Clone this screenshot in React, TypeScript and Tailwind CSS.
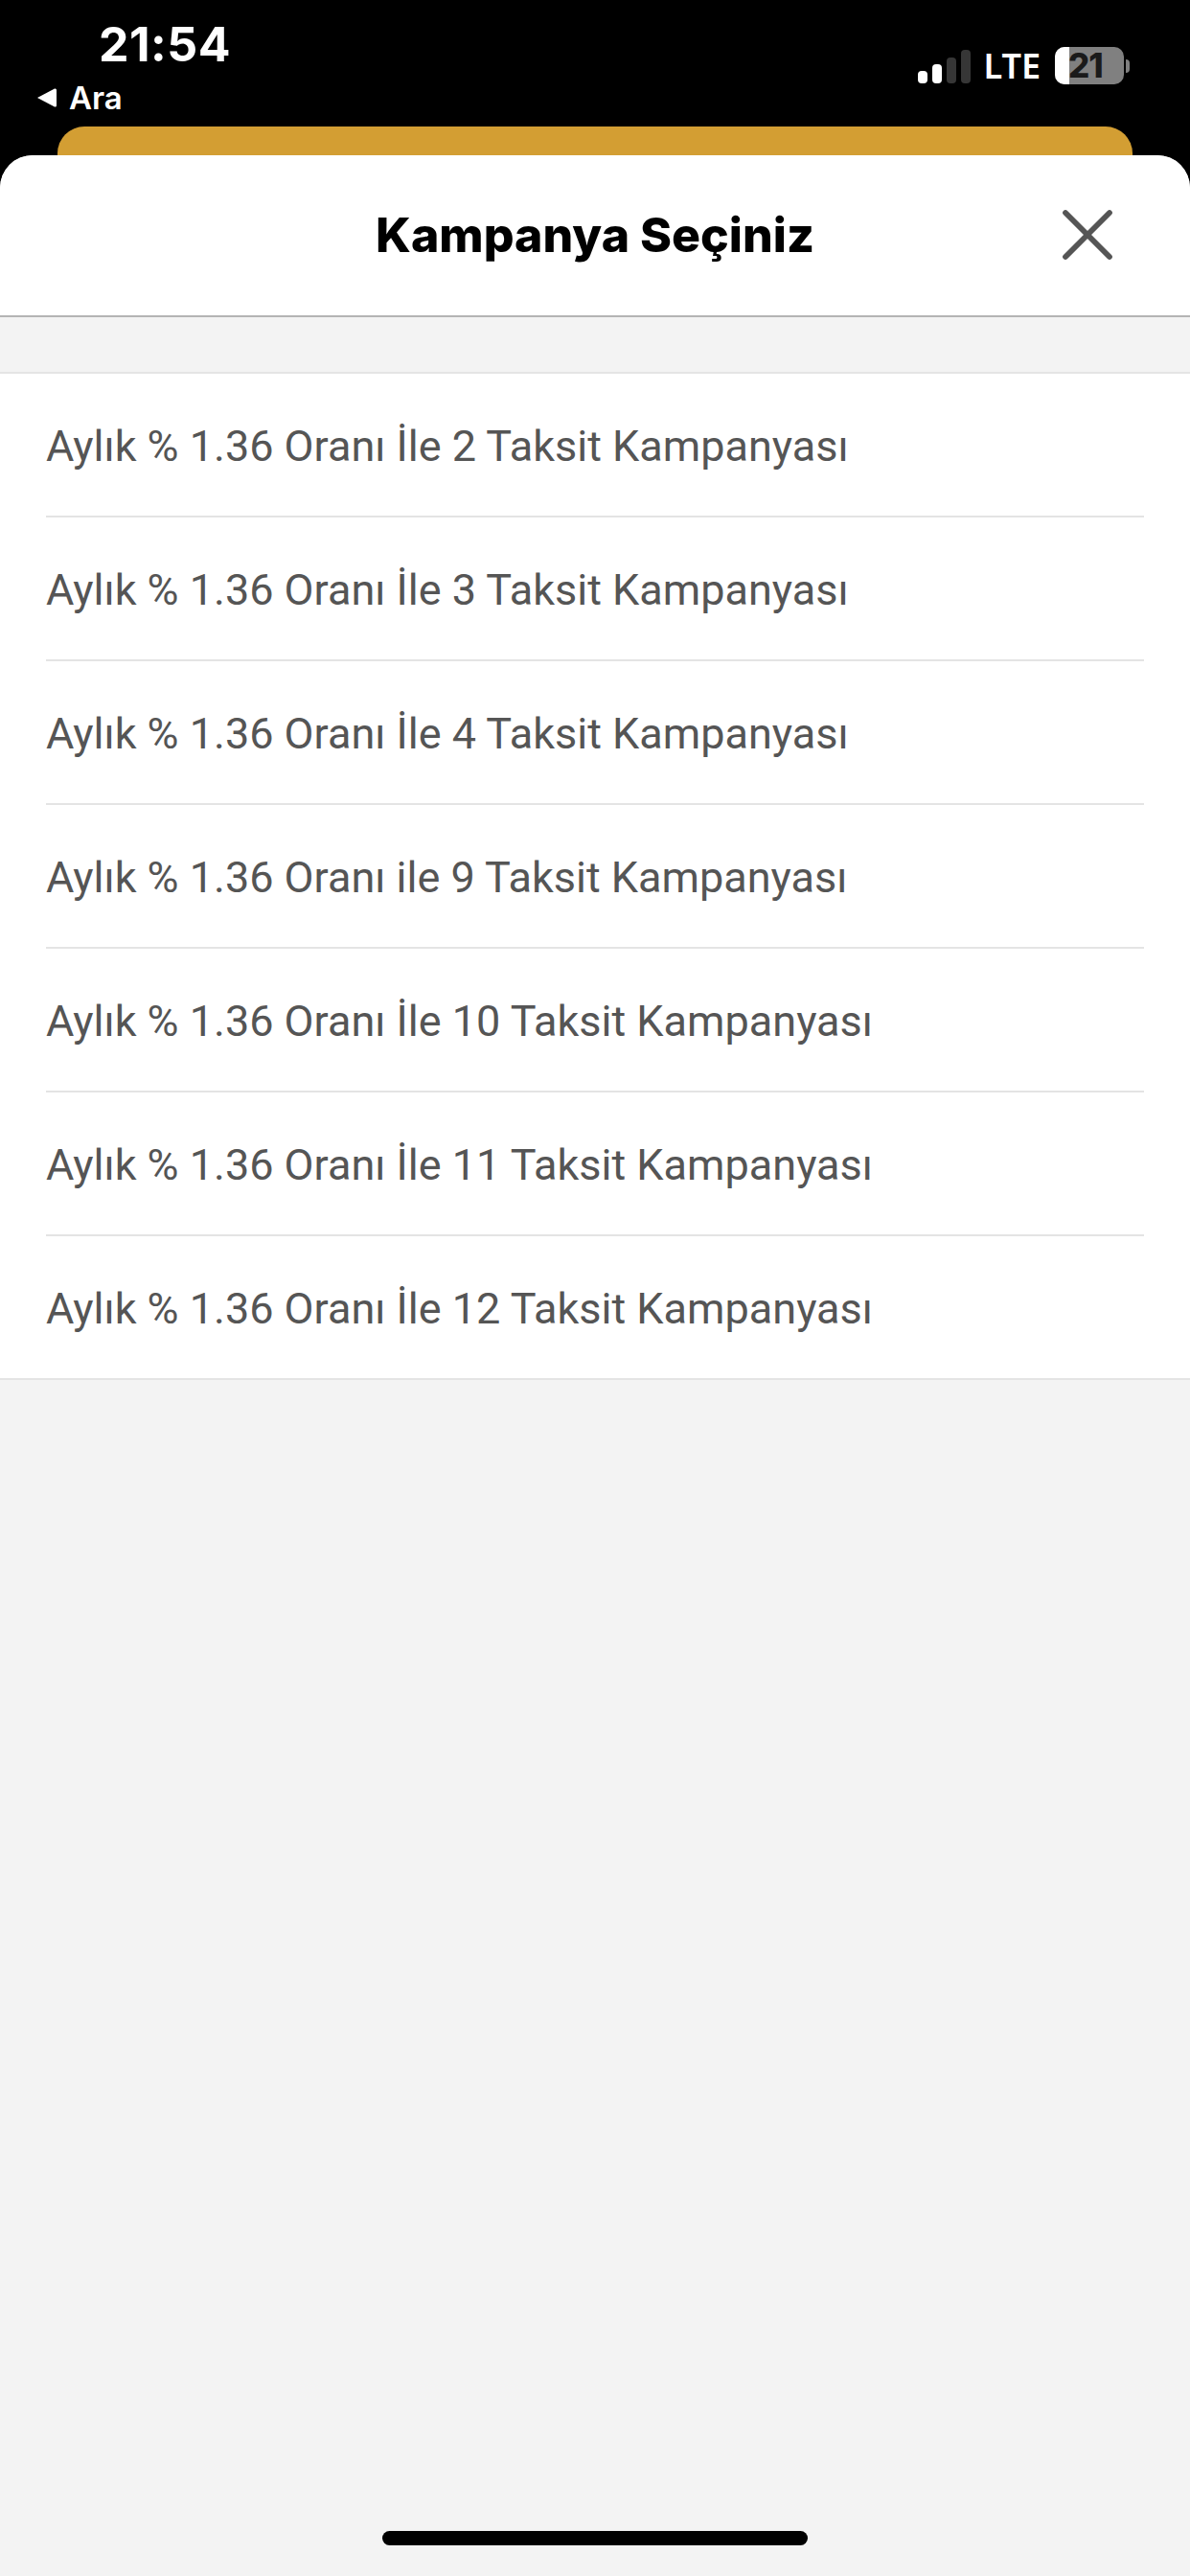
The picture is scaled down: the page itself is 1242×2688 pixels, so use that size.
import { X } from "lucide-react";

const campaigns = [
  "Aylık % 1.36 Oranı İle 2 Taksit Kampanyası",
  "Aylık % 1.36 Oranı İle 3 Taksit Kampanyası",
  "Aylık % 1.36 Oranı İle 4 Taksit Kampanyası",
  "Aylık % 1.36 Oranı ile 9 Taksit Kampanyası",
  "Aylık % 1.36 Oranı İle 10 Taksit Kampanyası",
  "Aylık % 1.36 Oranı İle 11 Taksit Kampanyası",
  "Aylık % 1.36 Oranı İle 12 Taksit Kampanyası",
];

function SignalBars() {
  return (
    <div className="flex h-[36px] items-end gap-[5px]">
      <div className="h-[13px] w-[10px] rounded-[4px] bg-white" />
      <div className="h-[20px] w-[10px] rounded-[4px] bg-white" />
      <div className="h-[27px] w-[10px] rounded-[4px] bg-[#363636]" />
      <div className="h-[35px] w-[10px] rounded-[4px] bg-[#363636]" />
    </div>
  );
}

function Battery() {
  return (
    <div className="ml-[2px] flex items-center gap-[2px]">
      <div className="relative h-[39px] w-[72px] rounded-[10px] bg-[#808080]">
        <div className="h-full w-[15px] rounded-l-[10px] bg-white" />
        <span className="absolute left-[14px] top-0 text-[35px] leading-[39px] font-extrabold tracking-[-1px] text-[#1a1a1a] [font-family:Inter,sans-serif]">
          21
        </span>
      </div>
      <div className="h-[14px] w-[4px] rounded-r-full bg-[#808080]" />
    </div>
  );
}

function StatusBar() {
  return (
    <header className="flex h-[162px] flex-col bg-black text-white">
      <div className="flex justify-between">
        <div className="flex flex-col">
          <span className="pl-[103px] pt-[22px] text-[50px] leading-[48px] font-bold tracking-[0.5px] [font-family:Inter,sans-serif]">
            21:54
          </span>
          <span className="flex items-center gap-[12px] pl-[38px] pt-[14px] text-[33px] leading-[36px] font-semibold [font-family:Inter,sans-serif]">
            <svg width="22" height="22" viewBox="0 0 22 22" className="fill-white">
              <path d="M1 11 L19 1.5 Q21 1 21 3 L21 19 Q21 21 19 20.5 Z" />
            </svg>
            Ara
          </span>
        </div>
        <div className="flex items-center gap-[13px] self-start pr-[63px] pt-[49px]">
          <SignalBars />
          <span className="text-[36px] leading-[39px] font-semibold [font-family:'Noto_Sans',sans-serif]">LTE</span>
          <Battery />
        </div>
      </div>
      <div className="mx-[60px] mt-auto h-[30px] rounded-t-[28px] bg-[#d39e33]" />
    </header>
  );
}

export default function App() {
  return (
    <div className="flex h-[2688px] w-[1242px] flex-col overflow-hidden bg-black [font-family:Roboto,sans-serif]">
      <StatusBar />
      <main className="relative flex flex-1 flex-col overflow-hidden rounded-t-[34px] bg-[#f3f3f3]">
        <div className="relative flex h-[169px] items-center justify-center border-b-2 border-[#b4b4b4] bg-white">
          <h1 className="text-[50px] font-extrabold text-black [font-family:Inter,sans-serif]">Kampanya Seçiniz</h1>
          <button className="absolute right-[61px] top-[37px] text-[#555555]">
            <X size={92} strokeWidth={1.5} />
          </button>
        </div>
        <ul className="mt-[57px] border-y-2 border-[#e4e4e4] bg-white">
          {campaigns.map((c, i) => (
            <li key={c} className="px-[48px]">
              <div
                className={`flex items-center pt-[3px] text-[45px] text-[#555555] ${
                  i < campaigns.length - 1 ? "h-[150px] border-b-2 border-[#e4e4e4]" : "h-[148px]"
                }`}
              >
                {c}
              </div>
            </li>
          ))}
        </ul>
        <div className="absolute bottom-[32px] left-[399px] h-[15px] w-[444px] rounded-full bg-black" />
      </main>
    </div>
  );
}
